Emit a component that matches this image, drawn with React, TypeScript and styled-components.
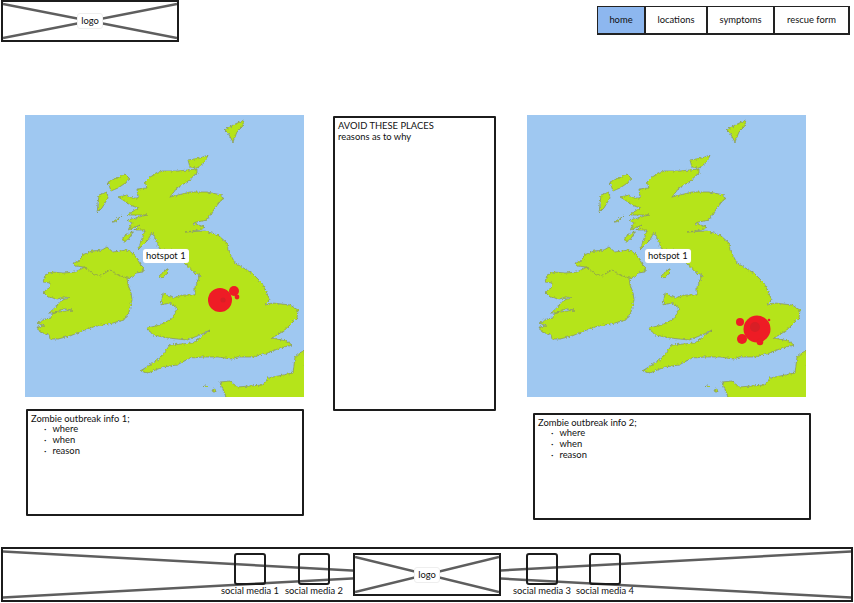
import React from "react";
import styled, { createGlobalStyle } from "styled-components";

const GlobalStyle = createGlobalStyle`
    html, body {
        margin: 0;
        padding: 0;
        background: #fff;
        overflow: hidden;
    }
    body {
        font-family: Lato, "Liberation Sans", sans-serif;
        color: #111;
    }
`;

const Page = styled.div`
    width: 854px;
    height: 603px;
    display: flex;
    flex-direction: column;
    font-size: 9.4px;
`;

const Header = styled.header`
    display: flex;
    justify-content: space-between;
    align-items: flex-start;
    height: 42px;
    padding: 0 4px 0 1px;
`;

const Placeholder = styled.div<{ $width: number; $height: number }>`
    position: relative;
    flex: none;
    box-sizing: border-box;
    width: ${(p) => p.$width}px;
    height: ${(p) => p.$height}px;
    background: #fff;
    border: 2px solid #1c1c1c;
    display: flex;
    align-items: center;
    justify-content: center;
`;

const CrossLines = styled.svg`
    position: absolute;
    inset: 0;
    width: 100%;
    height: 100%;
`;

const PlaceholderLabel = styled.span`
    position: relative;
    padding: 1px 3px 2px;
    background: #fff;
    border: 1px solid #eee;
    border-radius: 3px;
    line-height: 11px;
`;

const Nav = styled.nav`
    display: flex;
    margin-top: 6px;
    height: 29px;
    box-sizing: border-box;
    border: 1px solid #222;
    border-right-width: 2px;
    border-bottom-width: 2px;
`;

const Tab = styled.div<{ $width: number; $active?: boolean }>`
    box-sizing: border-box;
    width: ${(p) => p.$width}px;
    display: flex;
    align-items: center;
    justify-content: center;
    padding-bottom: 2px;
    background: ${(p) => (p.$active ? "#8db7ef" : "#fff")};
    & + & {
        border-left: 2px solid #222;
    }
`;

const Main = styled.main`
    display: grid;
    grid-template-columns: 279px 165px 279px;
    column-gap: 29px;
    align-items: start;
    margin-top: 73px;
    padding-left: 25px;
`;

const Column = styled.section`
    display: flex;
    flex-direction: column;
`;

const MapFrame = styled.div`
    position: relative;
    width: 279px;
    height: 282px;
    background: #9fc8f1;
    overflow: hidden;
`;

const MapDrawing = styled.svg`
    display: block;
    width: 100%;
    height: 100%;
`;

const HotspotLabel = styled.span`
    position: absolute;
    left: 118px;
    top: 134px;
    padding: 1px 3px;
    background: #fff;
    border-radius: 3px;
    line-height: 12px;
    white-space: nowrap;
    box-shadow: 0 0 1px #ccc;
`;

const TextBox = styled.div<{ $width: number; $height: number; $top?: number; $left?: number }>`
    box-sizing: border-box;
    width: ${(p) => p.$width}px;
    height: ${(p) => p.$height}px;
    margin-top: ${(p) => p.$top ?? 0}px;
    margin-left: ${(p) => p.$left ?? 0}px;
    padding: 2px 3px;
    background: #fff;
    border: 2px solid #1c1c1c;
    border-radius: 1px;
    line-height: 11px;
`;

const Reasons = styled.ul`
    margin: -1px 0 0;
    padding: 0 0 0 13px;
    list-style: none;
`;

const Reason = styled.li`
    display: flex;
    gap: 6px;
    &::before {
        content: "·";
    }
`;

const Footer = styled.footer`
    position: relative;
    display: flex;
    box-sizing: border-box;
    width: 852px;
    height: 55px;
    margin: auto 0 1px 1px;
    padding: 4px 0 0 216px;
    border: 2px solid #1c1c1c;
`;

const SocialGroup = styled.div<{ $gap: number; $left: number }>`
    position: relative;
    display: flex;
    gap: ${(p) => p.$gap}px;
    margin-left: ${(p) => p.$left}px;
`;

const Social = styled.div`
    display: flex;
    flex-direction: column;
    align-items: center;
    width: 62px;
`;

const SocialIcon = styled.div`
    box-sizing: border-box;
    width: 32px;
    height: 32px;
    border: 2px solid #1c1c1c;
    border-radius: 3px;
`;

const SocialLabel = styled.span`
    line-height: 11px;
    white-space: nowrap;
`;

const Cross = () => (
    <CrossLines preserveAspectRatio="none" viewBox="0 0 100 100">
        <line x1="0" y1="5" x2="100" y2="95" stroke="#5e5e5e" strokeWidth="2.5" vectorEffect="non-scaling-stroke" />
        <line x1="0" y1="95" x2="100" y2="5" stroke="#5e5e5e" strokeWidth="2.5" vectorEffect="non-scaling-stroke" />
    </CrossLines>
);

// coast outlines use the screenshot's pixels of the first map, see the viewBox
const britain =
    "M150 177 162 171 178 171 197 169 197 173 187 182 177 188 170 197 190 192 207 192 222 195 223 198 215 208 207 220 192 223 205 227 200 230 185 232 205 231 218 235 227 243 228 250 235 263 252 273 262 283 270 300 265 305 273 303 290 305 298 310 297 318 288 327 282 332 272 338 287 341 292 345 280 348 268 353 253 357 237 357 232 359 218 357 203 357 190 358 177 365 163 367 148 373 140 371 150 365 160 358 170 345 193 343 210 330 200 335 187 340 168 338 153 335 147 328 160 325 173 318 177 308 170 303 161 305 163 293 173 298 183 295 195 295 195 288 200 275 193 272 185 263 185 257 175 250 160 250 156 240 152 232 148 240 138 250 145 230 135 230 140 225 128 230 132 223 127 220 147 215 133 215 127 215 138 208 130 205 123 200 118 197 127 195 132 198 138 198 137 189 147 188 145 182 Z";
const ireland =
    "M73 263 80 261 82 255 92 251 102 250 107 247 113 252 127 250 132 252 138 260 140 264 144 268 143 272 136 273 133 277 127 278 128 285 131 292 132 300 129 312 124 320 113 323 102 325 93 327 82 331 70 336 58 339 50 339 49 335 40 332 37 327 45 326 37 323 45 319 51 318 52 314 58 312 73 310 63 309 55 313 49 313 58 305 62 300 70 298 65 297 57 299 48 297 43 292 49 288 50 283 43 282 45 275 52 272 63 273 75 272 85 267 75 266 Z";
const irishBorder = "M85 267 92 273 100 276 110 270 118 275 127 278";
const france = "M304 350 308 402 228 402 220 382 230 381 237 387 263 385 268 378 293 373 295 357 Z";
const islands = [
    "M108 182 125 174 129 178 127 182 118 188 111 191 Z",
    "M99 195 107 192 108 198 105 203 102 208 97 213 Z",
    "M112 222 122 216 118 220 114 222 Z",
    "M123 237 129 233 133 232 128 240 123 242 Z",
    "M188 160 200 158 208 155 205 162 197 168 190 167 Z",
    "M225 130 233 125 244 120 242 127 237 132 233 142 228 133 Z",
    "M158 277 167 269 168 273 162 278 Z",
    "M204 386 208 386 206 388 Z",
    "M212 390 215 389 216 392 213 392 Z",
];

const LAND = "#b5e41a";
const COAST = "#87935a";

interface Hotspot {
    x: number;
    y: number;
    r: number;
    dark?: boolean;
}

const HotspotMap: React.FC<{ id: string; spots: Hotspot[] }> = (props) => (
    <MapFrame>
        <MapDrawing viewBox="25 115 279 282">
            <defs>
                <filter
                    id={props.id}
                    filterUnits="userSpaceOnUse"
                    x="25"
                    y="115"
                    width="279"
                    height="282"
                    colorInterpolationFilters="sRGB"
                >
                    <feTurbulence type="fractalNoise" baseFrequency="0.45" numOctaves="2" seed="4" />
                    <feDisplacementMap in="SourceGraphic" scale="3.5" xChannelSelector="R" yChannelSelector="G" />
                </filter>
            </defs>
            <g filter={`url(#${props.id})`} fill={LAND} stroke={COAST} strokeWidth="0.7">
                <path d={britain} />
                <path d={ireland} />
                <path d={france} />
                {islands.map((d) => (
                    <path key={d} d={d} />
                ))}
                <path d={irishBorder} fill="none" />
            </g>
            {props.spots.map((s) => (
                <circle
                    key={`${s.x}-${s.y}`}
                    cx={s.x}
                    cy={s.y}
                    r={s.r}
                    fill={s.dark ? "#d81f26" : "#ee1c25"}
                />
            ))}
        </MapDrawing>
        <HotspotLabel>hotspot 1</HotspotLabel>
    </MapFrame>
);

const midlands: Hotspot[] = [
    { x: 220, y: 300, r: 12 },
    { x: 234, y: 291, r: 5 },
    { x: 237, y: 297, r: 2.4 },
    { x: 223, y: 300, r: 2.5, dark: true },
];

const london: Hotspot[] = [
    { x: 255, y: 329, r: 13.5 },
    { x: 253, y: 327, r: 5, dark: true },
    { x: 238, y: 322, r: 4 },
    { x: 240, y: 339, r: 5 },
    { x: 258, y: 342, r: 3.3 },
    { x: 267, y: 320, r: 1.3 },
];

const OutbreakInfo: React.FC<{ n: number; top: number; left: number }> = (props) => (
    <TextBox $width={278} $height={107} $top={props.top} $left={props.left}>
        Zombie outbreak info {props.n};
        <Reasons>
            <Reason>where</Reason>
            <Reason>when</Reason>
            <Reason>reason</Reason>
        </Reasons>
    </TextBox>
);

const SocialItem: React.FC<{ n: number }> = (props) => (
    <Social>
        <SocialIcon />
        <SocialLabel>social media {props.n}</SocialLabel>
    </Social>
);

const App: React.FC = () => (
    <Page>
        <GlobalStyle />
        <Header>
            <Placeholder $width={178} $height={42}>
                <Cross />
                <PlaceholderLabel>logo</PlaceholderLabel>
            </Placeholder>
            <Nav>
                <Tab $width={46} $active>home</Tab>
                <Tab $width={62}>locations</Tab>
                <Tab $width={67}>symptoms</Tab>
                <Tab $width={75}>rescue form</Tab>
            </Nav>
        </Header>
        <Main>
            <Column>
                <HotspotMap id="coast-one" spots={midlands} />
                <OutbreakInfo n={1} top={12} left={1} />
            </Column>
            <Column>
                <TextBox $width={163} $height={295} $top={1}>
                    AVOID THESE PLACES
                    <br />
                    reasons as to why
                </TextBox>
            </Column>
            <Column>
                <HotspotMap id="coast-two" spots={london} />
                <OutbreakInfo n={2} top={16} left={6} />
            </Column>
        </Main>
        <Footer>
            <Cross />
            <SocialGroup $gap={2} $left={0}>
                <SocialItem n={1} />
                <SocialItem n={2} />
            </SocialGroup>
            <SocialGroup $gap={0} $left={8}>
                <Placeholder $width={148} $height={43}>
                    <Cross />
                    <PlaceholderLabel>logo</PlaceholderLabel>
                </Placeholder>
            </SocialGroup>
            <SocialGroup $gap={1} $left={10}>
                <SocialItem n={3} />
                <SocialItem n={4} />
            </SocialGroup>
        </Footer>
    </Page>
);

export default App;
